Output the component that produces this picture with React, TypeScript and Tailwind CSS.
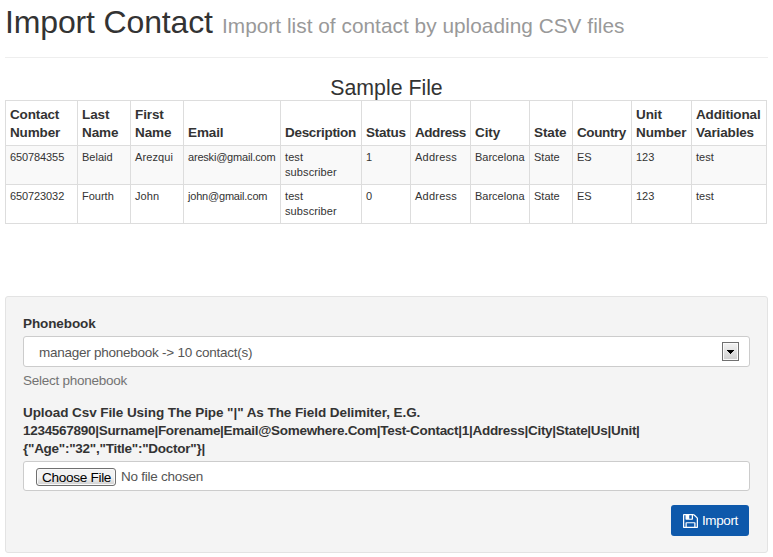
const columns = [
  { lines: ['Contact', 'Number'], width: 'w-[72px]', head: 'tracking-[-0.15px]', body: 'tracking-[-0.1px]' },
  { lines: ['Last', 'Name'], width: 'w-[53px]', head: 'tracking-[-0.1px]', body: '' },
  { lines: ['First', 'Name'], width: 'w-[53px]', head: 'tracking-[-0.1px]', body: 'tracking-[0.1px]' },
  { lines: ['Email'], width: 'w-[97px]', head: 'tracking-[-0.1px]', body: 'tracking-[-0.2px]' },
  { lines: ['Description'], width: 'w-[81px]', head: 'tracking-[-0.3px]', body: 'tracking-[0.1px]' },
  { lines: ['Status'], width: 'w-[49px]', head: 'tracking-[-0.25px]', body: '' },
  { lines: ['Address'], width: 'w-[60px]', head: 'tracking-[-0.45px]', body: 'tracking-[0.25px]' },
  { lines: ['City'], width: 'w-[59px]', head: 'tracking-[-0.1px]', body: '' },
  { lines: ['State'], width: 'w-[43px]', head: 'tracking-[-0.1px]', body: '' },
  { lines: ['Country'], width: 'w-[59px]', head: 'tracking-[-0.4px]', body: '' },
  { lines: ['Unit', 'Number'], width: 'w-[60px]', head: 'tracking-[-0.1px]', body: '' },
  { lines: ['Additional', 'Variables'], width: 'w-[75px]', head: 'tracking-[-0.15px]', body: '' },
];

const rows = [
  ['650784355', 'Belaid', 'Arezqui', 'areski@gmail.com', 'test subscriber', '1', 'Address', 'Barcelona', 'State', 'ES', '123', 'test'],
  ['650723032', 'Fourth', 'John', 'john@gmail.com', 'test subscriber', '0', 'Address', 'Barcelona', 'State', 'ES', '123', 'test'],
];

function SaveIcon() {
  return (
    <svg className="mt-px h-[14px] w-[15px]" viewBox="0 128 1536 1536" preserveAspectRatio="none" fill="white">
      <path d="M384 1536h768v-384h-768v384zm896 0h128v-896q0-14-10-38.5t-20-34.5l-281-281q-10-10-34-20t-39-10v416q0 40-28 68t-68 28h-576q-40 0-68-28t-28-68v-416h-128v1280h128v-416q0-40 28-68t68-28h832q40 0 68 28t28 68v416zm-384-928v-320q0-13-9.5-22.5t-22.5-9.5h-192q-13 0-22.5 9.5t-9.5 22.5v320q0 13 9.5 22.5t22.5 9.5h192q13 0 22.5-9.5t9.5-22.5zm640 32v928q0 40-28 68t-68 28h-1344q-40 0-68-28t-28-68v-1344q0-40 28-68t68-28h928q40 0 88 20t76 48l280 280q28 28 48 76t20 88z" />
    </svg>
  );
}

function SampleTable() {
  return (
    <div className="w-[762px] border-t border-l border-[#ddd]">
      <div className="flex h-[45px]">
        {columns.map((column, i) => (
          <div
            key={i}
            className={`flex shrink-0 flex-col justify-end border-r border-b border-[#ddd] pb-[3px] pl-1 text-[13.5px] leading-[18px] font-bold whitespace-nowrap ${column.head} ${column.width}`}
          >
            {column.lines.map((line) => (
              <span key={line}>{line}</span>
            ))}
          </div>
        ))}
      </div>
      {rows.map((row, r) => (
        <div key={r} className={`flex h-[39px] ${r === 0 ? 'bg-[#f9f9f9]' : 'bg-white'}`}>
          {row.map((cell, i) => (
            <div
              key={i}
              className={`shrink-0 border-r border-b border-[#ddd] pt-1 pl-1 text-[11px] leading-[15px] ${i === 4 ? 'pr-4' : ''} ${columns[i].body} ${columns[i].width}`}
            >
              {cell}
            </div>
          ))}
        </div>
      ))}
    </div>
  );
}

export default function App() {
  return (
    <main className="h-[557px] w-[773px] overflow-hidden bg-white pl-[5px] font-['Liberation_Sans',Arial,sans-serif] text-[#333]">
      <header className="flex h-[58px] w-[763px] items-baseline border-b border-[#eee] pt-1">
        <h1 className="w-[217px] text-[32px] leading-[36px] tracking-[-0.15px] whitespace-nowrap">Import Contact</h1>
        <small className="text-[20.8px] leading-[36px] tracking-[0.03px] whitespace-nowrap text-[#999]">
          Import list of contact by uploading CSV files
        </small>
      </header>

      <section className="h-[238px] pt-[18px]">
        <h2 className="h-6 w-[763px] text-center text-[21.3px] leading-[24px]">Sample File</h2>
        <SampleTable />
      </section>

      <form className="h-[257px] w-[763px] rounded-[3px] border border-[#e3e3e3] bg-[#f4f4f4] px-[17px] pt-[18px] text-[13.5px] leading-[18px]">
        <label className="block h-[21px] font-bold tracking-[-0.1px]">Phonebook</label>
        <div className="flex h-[31px] w-[727px] items-center justify-between rounded-[3px] border border-[#ccc] bg-white pr-[10px] pl-[15px] text-[#555]">
          <span className="pt-0.5 tracking-[-0.25px]">manager phonebook -&gt; 10 contact(s)</span>
          <span className="flex h-[19px] w-[17px] items-center justify-center border border-[#707070] bg-linear-to-b from-[#f3f3f3] to-[#cfcfcf] shadow-[inset_0_0_0_1px_#fafafa]">
            <svg className="h-1 w-[7px]" viewBox="0 0 7 4">
              <path d="M0 0h7v1H6v1H5v1H4v1H3V3H2V2H1V1H0z" fill="#000" />
            </svg>
          </span>
        </div>
        <p className="mt-[5px] tracking-[-0.25px] text-[#737373]">Select phonebook</p>
        <label className="mt-[14px] block h-[57px] font-bold whitespace-nowrap">
          <span className="block tracking-[-0.07px]">Upload Csv File Using The Pipe "|" As The Field Delimiter, E.G.</span>
          <span className="block tracking-[-0.29px]">1234567890|Surname|Forename|Email@Somewhere.Com|Test-Contact|1|Address|City|State|Us|Unit|</span>
          <span className="block tracking-[-0.26px]">{'{"Age":"32","Title":"Doctor"}|'}</span>
        </label>
        <div className="flex h-[30px] w-[727px] items-center rounded-[3px] border border-[#ccc] bg-white pl-3 text-[#555]">
          <button
            type="button"
            className="mt-[2px] flex h-[18px] w-20 items-center justify-center rounded-[3px] border border-[#707070] bg-linear-to-b from-[#f3f3f3] from-50% to-[#cfcfcf] pt-px pl-px text-[13.6px] leading-[16px] tracking-[-0.3px] whitespace-nowrap text-black shadow-[inset_0_0_0_1px_#fafafa]"
          >
            Choose File
          </button>
          <span className="ml-[5px] pt-0.5 tracking-[-0.25px]">No file chosen</span>
        </div>
        <div className="mt-[14px] flex w-[726px] justify-end">
          <button
            type="button"
            className="flex h-[31px] w-[78px] items-center gap-1 rounded-[3px] bg-[#0e59ab] pl-3 text-[13.5px] tracking-[-0.4px] text-white"
          >
            <SaveIcon />
            Import
          </button>
        </div>
      </form>
    </main>
  );
}
